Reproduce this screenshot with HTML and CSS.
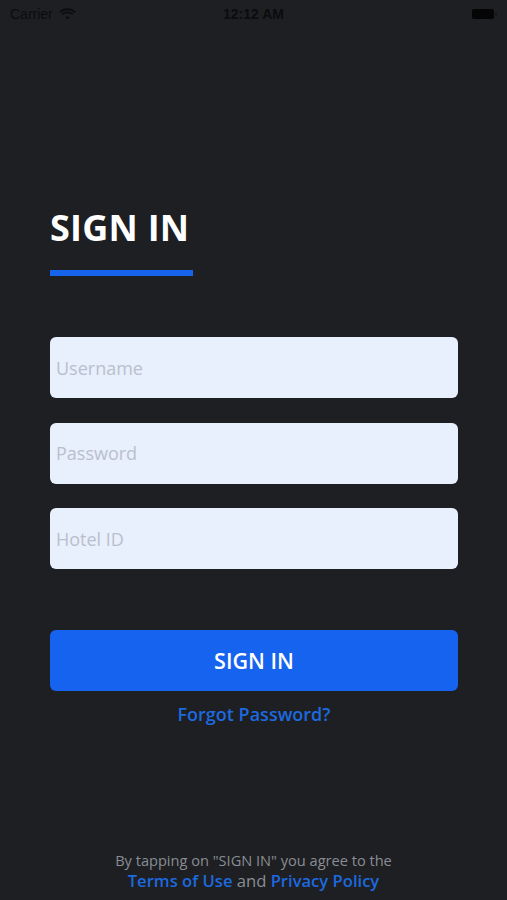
FILE: index.html
```html
<!DOCTYPE html>
<html lang="en">
<head>
<meta charset="utf-8">
<title>Sign In</title>
<link rel="stylesheet" href="styles.css">
</head>
<body>
<div class="page">
  <div class="status-bar">
    <div class="status-left">
      <span class="carrier">Carrier</span>
      <svg class="wifi" width="17" height="12" viewBox="0 0 17 12">
        <path d="M8.5 2.2c2.6 0 5 1 6.8 2.7l1.3-1.3C14.5 1.5 11.6.3 8.5.3S2.5 1.5.4 3.6l1.3 1.3C3.5 3.2 5.9 2.2 8.5 2.2z" fill="#0b0c0e"/>
        <path d="M8.5 5.3c1.7 0 3.3.7 4.5 1.8l1.3-1.3C12.8 4.3 10.7 3.4 8.5 3.4S4.2 4.3 2.7 5.8L4 7.1c1.2-1.1 2.8-1.8 4.5-1.8z" fill="#0b0c0e"/>
        <path d="M8.5 8.4c.9 0 1.6.3 2.2.9l-2.2 2.3-2.2-2.3c.6-.6 1.3-.9 2.2-.9z" fill="#0b0c0e"/>
      </svg>
    </div>
    <div class="status-time">12:12 AM</div>
    <div class="status-right">
      <span class="battery"></span><span class="battery-nub"></span>
    </div>
  </div>

  <main class="content">
    <h1 class="title">SIGN IN</h1>
    <div class="title-bar"></div>

    <form class="form">
      <input class="field" type="text" placeholder="Username">
      <input class="field" type="password" placeholder="Password">
      <input class="field" type="text" placeholder="Hotel ID">
      <button class="submit" type="button">SIGN IN</button>
    </form>
    <a class="forgot" href="#">Forgot Password?</a>
  </main>

  <footer class="footer">
    <p class="footer-line">By tapping on "SIGN IN" you agree to the</p>
    <p class="footer-links"><a href="#">Terms of Use</a> and <a href="#">Privacy Policy</a></p>
  </footer>
</div>
</body>
</html>
```
FILE: styles.css
```css
* { box-sizing: border-box; }

html, body {
  margin: 0;
  padding: 0;
  background: #1d1f23;
}

body {
  font-family: "Open Sans", "Noto Sans", sans-serif;
}

.page {
  height: 900px;
  display: flex;
  flex-direction: column;
}

.status-bar {
  height: 28px;
  display: flex;
  align-items: center;
  justify-content: space-between;
  padding: 0 10px;
  color: #0b0c0e;
  font-size: 14px;
  position: relative;
}

.status-left {
  display: flex;
  align-items: center;
  gap: 6px;
}

.carrier {
  font-family: "Liberation Sans", sans-serif;
  font-size: 14px;
}

.status-time {
  position: absolute;
  left: 0;
  right: 0;
  text-align: center;
  font-family: "Liberation Sans", sans-serif;
  font-weight: bold;
  font-size: 14px;
  pointer-events: none;
}

.status-right {
  display: flex;
  align-items: center;
}

.battery {
  display: block;
  width: 22px;
  height: 10px;
  background: #050506;
  border-radius: 2px;
}

.battery-nub {
  display: block;
  width: 2px;
  height: 4px;
  margin-left: 1px;
  background: #15161a;
  border-radius: 0 1px 1px 0;
}

.content {
  padding: 0 49px 0 50px;
  display: flex;
  flex-direction: column;
}

.title {
  margin: 178px 0 0;
  font-size: 36px;
  line-height: 44px;
  font-weight: 700;
  color: #ffffff;
  letter-spacing: 0.25px;
}

.title-bar {
  margin-top: 20px;
  width: 143px;
  height: 6px;
  background: #1663ec;
}

.form {
  margin: 61px 0 0;
  display: flex;
  flex-direction: column;
  gap: 24.5px;
}

.field {
  display: block;
  width: 100%;
  height: 61px;
  border: none;
  border-radius: 6px;
  background: #e8effd;
  padding: 0 6px;
  font-family: "Open Sans", sans-serif;
  font-size: 18px;
  color: #333;
  outline: none;
}

.field::placeholder {
  color: #b9c0cc;
}

.submit {
  margin-top: 36.5px;
  width: 100%;
  height: 61px;
  border: none;
  border-radius: 6px;
  background: #1563ee;
  color: #ffffff;
  font-family: "Open Sans", sans-serif;
  font-size: 21.5px;
  font-weight: 600;
  cursor: pointer;
}

.forgot {
  margin-top: 11px;
  align-self: center;
  font-size: 18px;
  line-height: 24px;
  font-weight: 600;
  color: #1d69df;
  text-decoration: none;
}

.footer {
  margin-top: auto;
  padding-bottom: 8px;
  text-align: center;
}

.footer p {
  margin: 0;
}

.footer-line {
  font-size: 14.6px;
  line-height: 20px;
  color: #8a8d93;
}

.footer-links {
  font-size: 16.6px;
  line-height: 22px;
  color: #8a8d93;
}

.footer-links a {
  color: #1d69df;
  font-weight: 600;
  text-decoration: none;
}
```
